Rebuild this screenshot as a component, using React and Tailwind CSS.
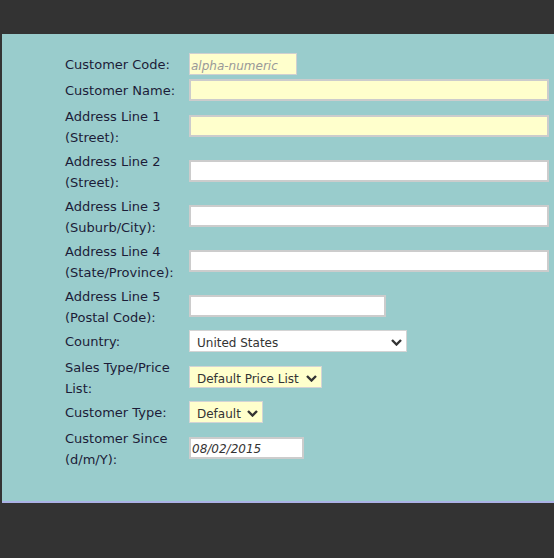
const font = { fontFamily: '"DejaVu Sans", Verdana, sans-serif' }

function Chevron() {
  return (
    <svg width="11" height="7" viewBox="0 0 11 7" className="absolute right-[4px] top-[8px] pointer-events-none">
      <polyline points="1,1 5.5,5.5 10,1" fill="none" stroke="#333" strokeWidth="2.4" />
    </svg>
  )
}

function Row({ label, tall, children }) {
  return (
    <div className={`flex items-center ${tall ? 'h-[45px]' : 'h-[26px]'}`}>
      <div className={`relative w-[124px] shrink-0 text-[13px] leading-[20.5px] text-[#1c1c38] ${tall ? 'top-[2px]' : 'top-[1px]'}`}>{label}</div>
      {children}
    </div>
  )
}

function TextBox({ w, yellow, placeholder, value, italic }) {
  return (
    <input
      readOnly
      defaultValue={value}
      placeholder={placeholder}
      className={`${w} h-[22px] border-2 border-[#cccccc] px-[1px] pt-[3px] pb-0 text-[12px] text-[#333] outline-none ${yellow ? 'bg-[#ffffcc]' : 'bg-white'} ${italic ? 'italic' : ''} placeholder:text-[#999] placeholder:italic`}
      style={font}
    />
  )
}

function Select({ w, yellow, value }) {
  return (
    <div className={`relative ${w} h-[22px] border border-[#d4d4d4] ${yellow ? 'bg-[#ffffcc]' : 'bg-white'}`}>
      <div className="pl-[7px] pt-[2px] text-[12px] leading-[20px] text-[#333]" style={font}>{value}</div>
      <Chevron />
    </div>
  )
}

export default function App() {
  return (
    <div className="min-h-screen bg-[#333333] pt-[34px]" style={font}>
      <div className="ml-[2px] bg-[#99cccc] border-b-2 border-[#abb2e6] pl-[63px] pt-[17px] pb-[31px]">
        <Row label="Customer Code:">
          <input
            readOnly
            placeholder="alpha-numeric"
            className="w-[108px] h-[22px] border border-[#d0d0d0] bg-[#ffffcc] px-[1px] pt-[3px] pb-0 text-[12px] italic outline-none placeholder:text-[#999]"
            style={font}
          />
        </Row>
        <Row label="Customer Name:">
          <TextBox w="w-[360px]" yellow />
        </Row>
        <Row label={<>Address Line 1<br />(Street):</>} tall>
          <TextBox w="w-[360px]" yellow />
        </Row>
        <Row label={<>Address Line 2<br />(Street):</>} tall>
          <TextBox w="w-[360px]" />
        </Row>
        <Row label={<>Address Line 3<br />(Suburb/City):</>} tall>
          <TextBox w="w-[360px]" />
        </Row>
        <Row label={<>Address Line 4<br />(State/Province):</>} tall>
          <TextBox w="w-[360px]" />
        </Row>
        <Row label={<>Address Line 5<br />(Postal Code):</>} tall>
          <TextBox w="w-[197px]" />
        </Row>
        <Row label="Country:">
          <Select w="w-[218px]" value="United States" />
        </Row>
        <Row label={<>Sales Type/Price<br />List:</>} tall>
          <Select w="w-[133px]" yellow value="Default Price List" />
        </Row>
        <Row label="Customer Type:">
          <Select w="w-[74px]" yellow value="Default" />
        </Row>
        <Row label={<>Customer Since<br />(d/m/Y):</>} tall>
          <TextBox w="w-[115px]" value="08/02/2015" italic />
        </Row>
      </div>
    </div>
  )
}
